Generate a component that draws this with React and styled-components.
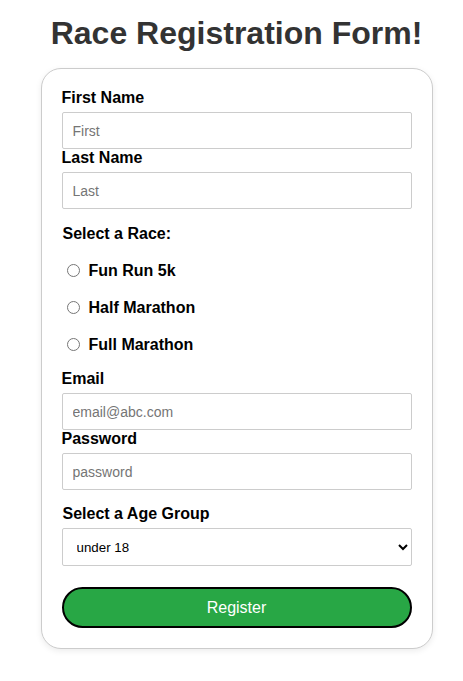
import styled, { createGlobalStyle } from "styled-components";

const GlobalStyle = createGlobalStyle`
  body {
    margin: 0;
    background: #fff;
    font-family: "Liberation Sans", Arial, sans-serif;
  }
`;

const Page = styled.div`
  display: flex;
  flex-direction: column;
  align-items: center;
  padding: 15px 0 20px 10px;
`;

const Title = styled.h1`
  margin: 0 0 16px;
  font-size: 32px;
  font-weight: bold;
  color: #333;
  text-align: center;
`;

const Form = styled.form`
  box-sizing: border-box;
  width: 392px;
  padding: 20px 20px 20px;
  border: 1px solid #ccc;
  border-radius: 20px;
  background: #fff;
  box-shadow: 0 2px 6px rgba(0, 0, 0, 0.08);
  display: flex;
  flex-direction: column;
`;

const Label = styled.label`
  display: block;
  font-size: 16px;
  font-weight: bold;
  color: #000;
  margin-bottom: 5px;
`;

const Heading = styled.p`
  margin: ${(p) => p.$top || 16}px 0 0 1px;
  font-size: 16px;
  font-weight: bold;
  color: #000;
`;

const Input = styled.input`
  box-sizing: border-box;
  width: 100%;
  height: 37px;
  padding: 0 10px;
  border: 1px solid #ccc;
  border-radius: 2px;
  font-family: "Liberation Sans", Arial, sans-serif;
  font-size: 14px;
  outline: none;
  &::placeholder {
    color: #757575;
  }
`;

const RadioGroup = styled.div`
  display: flex;
  flex-direction: column;
  padding: 9px 0 0;
  margin-bottom: 7px;
`;

const RadioRow = styled.label`
  height: 37px;
  display: flex;
  align-items: center;
  font-size: 16px;
  font-weight: bold;
  color: #000;
`;

const Radio = styled.input`
  margin: 0 9px 0 5px;
  width: 13px;
  height: 13px;
`;

const Select = styled.select`
  box-sizing: border-box;
  width: 100%;
  height: 38px;
  margin-top: 5px;
  padding: 0 10px;
  border: 1px solid #ccc;
  border-radius: 2px;
  background: #fff;
  font-family: "Liberation Sans", Arial, sans-serif;
  font-size: 13.33px;
  color: #000;
`;

const Button = styled.button`
  margin-top: 21px;
  height: 41px;
  width: 100%;
  border: 2px solid #000;
  border-radius: 21px;
  background: #28a745;
  color: #fff;
  font-family: "Liberation Sans", Arial, sans-serif;
  font-size: 16px;
  cursor: pointer;
`;

const races = ["Fun Run 5k", "Half Marathon", "Full Marathon"];

export default function App() {
  return (
    <>
      <GlobalStyle />
      <Page>
        <Title>Race Registration Form!</Title>
        <Form onSubmit={(e) => e.preventDefault()}>
          <Label htmlFor="first">First Name</Label>
          <Input id="first" placeholder="First" />
          <Label htmlFor="last">Last Name</Label>
          <Input id="last" placeholder="Last" />

          <Heading>Select a Race:</Heading>
          <RadioGroup>
            {races.map((r) => (
              <RadioRow key={r}>
                <Radio type="radio" name="race" value={r} />
                {r}
              </RadioRow>
            ))}
          </RadioGroup>

          <Label htmlFor="email">Email</Label>
          <Input id="email" type="email" placeholder="email@abc.com" />
          <Label htmlFor="password">Password</Label>
          <Input id="password" type="password" placeholder="password" />

          <Heading $top={15}>Select a Age Group</Heading>
          <Select defaultValue="under18">
            <option value="under18">under 18</option>
            <option value="18-30">18 - 30</option>
            <option value="31-50">31 - 50</option>
            <option value="over50">over 50</option>
          </Select>

          <Button type="submit">Register</Button>
        </Form>
      </Page>
    </>
  );
}
